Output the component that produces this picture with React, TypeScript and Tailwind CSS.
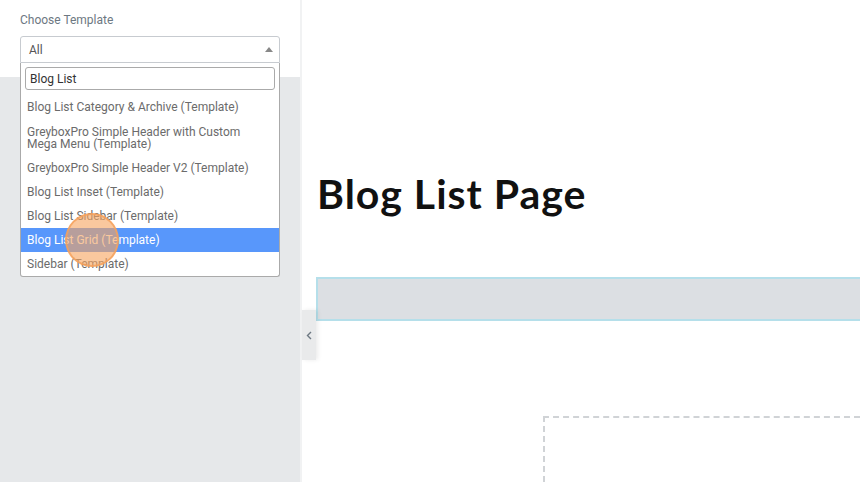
export default function App() {
  const items = [
    'Blog List Category & Archive (Template)',
    'GreyboxPro Simple Header with Custom Mega Menu (Template)',
    'GreyboxPro Simple Header V2 (Template)',
    'Blog List Inset (Template)',
    'Blog List Sidebar (Template)',
    'Blog List Grid (Template)',
    'Sidebar (Template)',
  ];

  return (
    <div className="flex w-[860px] h-[482px] overflow-hidden bg-white" style={{ fontFamily: 'Roboto, "Liberation Sans", sans-serif' }}>
      {/* left panel */}
      <div className="relative w-[300px] shrink-0 flex flex-col bg-[#e6e8ea]">
        <div className="h-[77px] bg-white" />
        <div className="absolute left-[20px] top-[12px] w-[260px]">
          <div className="text-[12px] text-[#6d7882] leading-[16px]">Choose Template</div>
          <div className="mt-[8px] h-[27px] border border-[#c7cbd0] rounded-t-[3px] bg-white flex items-center justify-between pl-[8px] pr-[6px]">
            <span className="text-[12px] text-[#555]">All</span>
            <svg width="8" height="5" viewBox="0 0 8 5"><path d="M0 5 L4 0 L8 5 Z" fill="#888" /></svg>
          </div>
          <div className="border border-t-0 border-[#aaa] rounded-b-[3px] bg-white">
            <div className="p-[4px] pb-[5px]">
              <div className="h-[23px] border border-[#aaa] rounded-[3px] flex items-center px-[4px] text-[12px] text-[#333]">Blog List</div>
            </div>
            <ul className="text-[12px] text-[#6b6b6b]">
              {items.map((it, i) => (
                <li
                  key={it}
                  className={`px-[6px] ${i === 1 ? 'pt-[7px] pb-[6px] leading-[12px]' : 'py-[4px] leading-[16px]'} ${i === 5 ? 'bg-[#5897fb] text-white' : ''}`}
                >
                  {it}
                </li>
              ))}
            </ul>
          </div>
        </div>
        {/* click indicator */}
        <div className="absolute left-[65px] top-[213px] w-[54px] h-[54px] rounded-full bg-[#f6a35e]/60 border-2 border-[#f5a15b]/80" />
      </div>
      <div className="w-[2px] bg-[#f1f2f3] shrink-0" />

      {/* canvas */}
      <div className="relative flex-1 flex flex-col">
        <div className="absolute left-0 top-[310px] w-[14px] h-[50px] bg-[#e9eaeb] shadow-[2px_0_4px_rgba(0,0,0,0.08)] flex items-center justify-center">
          <svg width="6" height="9" viewBox="0 0 6 9"><path d="M5 1 L1.5 4.5 L5 8" fill="none" stroke="#6d7882" strokeWidth="1.4" /></svg>
        </div>
        <div className="h-[170px]" />
        <h1 className="pl-[15px] text-[41px] leading-[48px] font-bold text-[#111] tracking-[1px]" style={{ fontFamily: 'Lato, "Noto Sans", sans-serif' }}>
          Blog List Page
        </h1>
        <div className="h-[59px]" />
        <div className="ml-[14px] h-[44px] bg-[#dcdfe3] border-2 border-r-0 border-[#b5dfea]" />
        <div className="h-[95px]" />
        <div className="ml-[241px] flex-1 border-2 border-r-0 border-b-0 border-dashed border-[#d0d3d6]" />
      </div>
    </div>
  );
}
